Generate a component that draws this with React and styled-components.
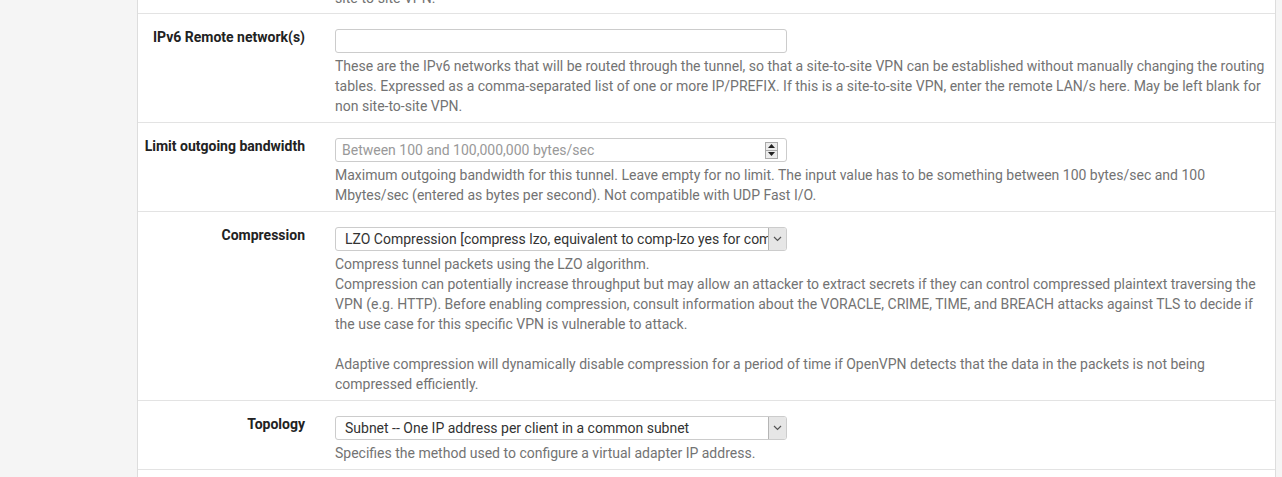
import * as React from "react";
import styled, { createGlobalStyle } from "styled-components";

/* ----------------------------- global styles ----------------------------- */

const GlobalStyle = createGlobalStyle`
  html, body {
    margin: 0;
    padding: 0;
    background: #f5f5f5;
    font-family: Roboto, "Liberation Sans", Arial, sans-serif;
    font-size: 14px;
    line-height: 20px;
    color: #333;
  }
  * { box-sizing: border-box; }
`;

/* ------------------------------- layout ---------------------------------- */

const Page = styled.div`
  display: flex;
  height: 477px;
  overflow: hidden;
`;

const Gutter = styled.div`
  width: ${(p) => p.$w}px;
  flex: none;
`;

const Panel = styled.div`
  flex: 1;
  background: #fff;
  border-left: 1px solid #ddd;
  border-right: 1px solid #ddd;
  margin-top: -12px;
`;

const Row = styled.div`
  display: flex;
  padding: ${(p) => (p.$stub ? "0" : "15px")} 0 ${(p) => (p.$stub ? 5 : 6)}px;
  border-bottom: 1px solid #e3e3e3;
`;

const Label = styled.div`
  width: 182px;
  flex: none;
  padding-right: 15px;
  text-align: right;
  font-weight: 700;
  color: #222;
  line-height: 20px;
  margin-top: -2px;
`;

const Field = styled.div`
  flex: 1;
  padding: 0 6px 0 15px;
`;

const Help = styled.div`
  color: #737373;
  margin-top: ${(p) => (p.$flush ? 0 : 3)}px;
  line-height: 20px;
`;

const Blank = styled.div`
  height: 20px;
`;

/* ------------------------------- controls -------------------------------- */

const Box = styled.div`
  width: 452px;
  height: 24px;
  border: 1px solid #ccc;
  border-radius: 3px;
  background: #fff;
  display: flex;
  align-items: center;
  overflow: hidden;
`;

const BoxText = styled.span`
  flex: 1;
  padding-left: ${(p) => p.$pad}px;
  white-space: nowrap;
  overflow: hidden;
  color: ${(p) => (p.$placeholder ? "#999" : "#333")};
`;

const Spinner = styled.div`
  width: 13px;
  height: 17px;
  margin-right: 8px;
  display: flex;
  flex-direction: column;
  border: 1px solid #aaa;
  background: #ececec;
`;

const SpinHalf = styled.div`
  flex: 1;
  display: flex;
  align-items: center;
  justify-content: center;
  & + & {
    border-top: 1px solid #aaa;
  }
`;

const Arrow = styled.div`
  width: 18px;
  height: 22px;
  flex: none;
  background: #e6e6e6;
  border-left: 1px solid #b5b5b5;
  display: flex;
  align-items: center;
  justify-content: center;
`;

const Tri = ({ up }) => (
  <svg width="7" height="4" viewBox="0 0 7 4">
    <path d={up ? "M0 4 L3.5 0 L7 4 Z" : "M0 0 L3.5 4 L7 0 Z"} fill="#222" />
  </svg>
);

const Chevron = () => (
  <svg width="9" height="6" viewBox="0 0 9 6">
    <path d="M1 1 L4.5 4.5 L8 1" fill="none" stroke="#555" strokeWidth="1.2" />
  </svg>
);

const TextInput = () => <Box />;

const NumberInput = ({ placeholder }) => (
  <Box>
    <BoxText $pad={6} $placeholder>
      {placeholder}
    </BoxText>
    <Spinner>
      <SpinHalf>
        <Tri up />
      </SpinHalf>
      <SpinHalf>
        <Tri />
      </SpinHalf>
    </Spinner>
  </Box>
);

const Select = ({ value }) => (
  <Box>
    <BoxText $pad={9}>{value}</BoxText>
    <Arrow>
      <Chevron />
    </Arrow>
  </Box>
);

/* -------------------------------- page ----------------------------------- */

export default function App() {
  return (
    <>
      <GlobalStyle />
      <Page>
        <Gutter $w={137} />
        <Panel>
          <Row $stub>
            <Label />
            <Field>
              <Help $flush>site-to-site VPN.</Help>
            </Field>
          </Row>

          <Row>
            <Label>IPv6 Remote network(s)</Label>
            <Field>
              <TextInput />
              <Help>
                These are the IPv6 networks that will be routed through the
                tunnel, so that a site-to-site VPN can be established without
                manually changing the routing tables. Expressed as a
                comma-separated list of one or more IP/PREFIX. If this is a
                site-to-site VPN, enter the remote LAN/s here. May be left blank
                for non site-to-site VPN.
              </Help>
            </Field>
          </Row>

          <Row>
            <Label>Limit outgoing bandwidth</Label>
            <Field>
              <NumberInput placeholder="Between 100 and 100,000,000 bytes/sec" />
              <Help>
                Maximum outgoing bandwidth for this tunnel. Leave empty for no
                limit. The input value has to be something between 100
                bytes/sec and 100 Mbytes/sec (entered as bytes per second). Not
                compatible with UDP Fast I/O.
              </Help>
            </Field>
          </Row>

          <Row>
            <Label>Compression</Label>
            <Field>
              <Select value="LZO Compression [compress lzo, equivalent to comp-lzo yes for compatibility]" />
              <Help>
                Compress tunnel packets using the LZO algorithm.
                <br />
                Compression can potentially increase throughput but may allow an
                attacker to extract secrets if they can control compressed
                plaintext traversing the VPN (e.g. HTTP). Before enabling
                compression, consult information about the VORACLE, CRIME, TIME,
                and BREACH attacks against TLS to decide if the use case for
                this specific VPN is vulnerable to attack.
                <Blank />
                Adaptive compression will dynamically disable compression for a
                period of time if OpenVPN detects that the data in the packets
                is not being compressed efficiently.
              </Help>
            </Field>
          </Row>

          <Row>
            <Label>Topology</Label>
            <Field>
              <Select value="Subnet -- One IP address per client in a common subnet" />
              <Help>
                Specifies the method used to configure a virtual adapter IP
                address.
              </Help>
            </Field>
          </Row>
        </Panel>
        <Gutter $w={6} />
      </Page>
    </>
  );
}
